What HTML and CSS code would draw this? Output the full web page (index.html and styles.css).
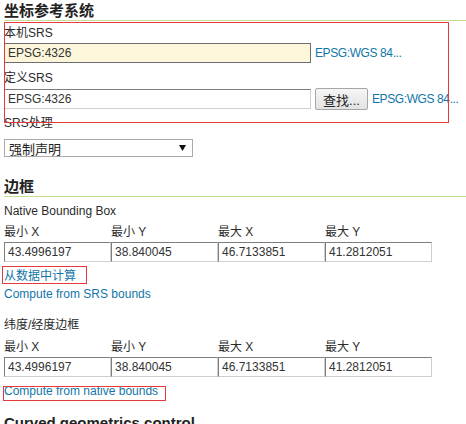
FILE: index.html
```html
<!DOCTYPE html>
<html lang="zh-CN">
<head>
<meta charset="utf-8">
<title>坐标参考系统</title>
<link rel="stylesheet" href="styles.css">
</head>
<body>
<div class="page">
  <h3 class="sec">坐标参考系统</h3>

  <div class="field f-native">
    <div class="lbl">本机SRS</div>
    <div class="row">
      <input class="inp inp-wide inp-ro" type="text" value="EPSG:4326" readonly>
      <a class="link link-srs" href="#">EPSG:WGS 84...</a>
    </div>
  </div>

  <div class="field f-declared">
    <div class="lbl">定义SRS</div>
    <div class="row">
      <input class="inp inp-wide" type="text" value="EPSG:4326">
      <button class="btn" type="button">查找...</button>
      <a class="link link-srs" href="#">EPSG:WGS 84...</a>
    </div>
  </div>

  <div class="field f-handling">
    <div class="lbl">SRS处理</div>
    <div class="select">
      <span>强制声明</span>
      <svg class="caret" width="7" height="6" viewBox="0 0 7 6"><polygon points="0,0 7,0 3.5,6" fill="#111"/></svg>
    </div>
  </div>

  <h3 class="sec sec-bbox">边框</h3>

  <div class="sub sub-native">Native Bounding Box</div>
  <div class="grid grid-native">
    <div class="cell"><div class="lbl">最小 X</div><input class="inp" type="text" value="43.4996197"></div>
    <div class="cell"><div class="lbl">最小 Y</div><input class="inp" type="text" value="38.840045"></div>
    <div class="cell"><div class="lbl">最大 X</div><input class="inp" type="text" value="46.7133851"></div>
    <div class="cell"><div class="lbl">最大 Y</div><input class="inp" type="text" value="41.2812051"></div>
  </div>
  <div class="links">
    <a class="link" href="#">从数据中计算</a>
    <a class="link" href="#">Compute from SRS bounds</a>
  </div>

  <div class="sub sub-latlon">纬度/经度边框</div>
  <div class="grid grid-latlon">
    <div class="cell"><div class="lbl">最小 X</div><input class="inp" type="text" value="43.4996197"></div>
    <div class="cell"><div class="lbl">最小 Y</div><input class="inp" type="text" value="38.840045"></div>
    <div class="cell"><div class="lbl">最大 X</div><input class="inp" type="text" value="46.7133851"></div>
    <div class="cell"><div class="lbl">最大 Y</div><input class="inp" type="text" value="41.2812051"></div>
  </div>
  <div class="links">
    <a class="link" href="#">Compute from native bounds</a>
  </div>

  <h3 class="sec sec-curved">Curved geometrics control</h3>

  <div class="mark mark-srs"></div>
  <div class="mark mark-data"></div>
  <div class="mark mark-native"></div>
</div>
</body>
</html>
```

FILE: styles.css
```css
html, body {
  margin: 0;
  padding: 0;
  background: #fff;
  overflow: hidden;
}

body {
  font-family: "Liberation Sans", Arial, "Noto Sans CJK SC", sans-serif;
  font-size: 12px;
  color: #2b2b2b;
}

.page {
  position: relative;
  padding-left: 4px;
}

.sec {
  margin: 0;
  padding: 2px 0 1px;
  font-size: 15px;
  line-height: 17px;
  font-weight: bold;
  color: #222;
  border-bottom: 1px solid #c2de92;
}

.sec-bbox { margin-top: 19px; }
.sec-curved { margin-top: 12px; border-bottom: none; }

.lbl {
  line-height: 16px;
  margin-bottom: 2px;
  white-space: nowrap;
}

.field.f-native { margin-top: 4px; }
.field.f-declared { margin-top: 7px; }
.field.f-handling { margin-top: 5px; }

.row {
  display: flex;
  align-items: center;
  gap: 4px;
  min-height: 20px;
}

.inp {
  box-sizing: border-box;
  height: 20px;
  margin: 0;
  padding: 0 3px;
  font-family: "Liberation Sans", Arial, "Noto Sans CJK SC", sans-serif;
  font-size: 12px;
  color: #333;
  background: #fff;
  border: 1px solid;
  border-color: #7d7d7d #cfcfcf #cfcfcf #7d7d7d;
  border-radius: 0;
  outline: none;
}

.inp-wide { width: 307px; }

.inp-ro {
  background: #fcf7da;
  border-color: #6e6e6e;
}

.link {
  color: #1276a8;
  text-decoration: none;
  white-space: nowrap;
}

.link-srs { letter-spacing: -0.4px; }

.btn {
  box-sizing: border-box;
  height: 22px;
  width: 53px;
  margin: 0;
  padding: 0;
  font-family: "Liberation Sans", Arial, "Noto Sans CJK SC", sans-serif;
  font-size: 13px;
  color: #222;
  background: linear-gradient(#f6f6f6, #e2e2e2);
  border: 1px solid #a6a6a6;
  border-radius: 2px;
}

.select {
  box-sizing: border-box;
  margin-top: 8px;
  width: 189px;
  height: 18px;
  display: flex;
  align-items: center;
  justify-content: space-between;
  padding: 0 6px 0 4px;
  border: 1px solid #ababab;
  background: #fff;
  font-size: 13px;
  color: #222;
}

.caret { display: block; }

.sub {
  line-height: 16px;
  color: #2b2b2b;
}

.sub-native { margin-top: 6px; }
.sub-latlon { margin-top: 14px; }

.grid {
  display: grid;
  grid-template-columns: repeat(4, 107px);
}

.grid-native { margin-top: 5px; }
.grid-latlon { margin-top: 6px; }

.grid .inp { width: 107px; }

.links {
  margin-top: 5px;
  display: flex;
  flex-direction: column;
  align-items: flex-start;
  line-height: 18px;
}

.mark {
  position: absolute;
  box-sizing: border-box;
  border: 1px solid #e5393b;
  pointer-events: none;
}

.mark-srs { left: 4px; top: 22px; width: 445px; height: 101px; }
.mark-data { left: 2px; top: 266px; width: 85px; height: 18px; }
.mark-native { left: 3px; top: 386px; width: 163px; height: 15px; }
```
